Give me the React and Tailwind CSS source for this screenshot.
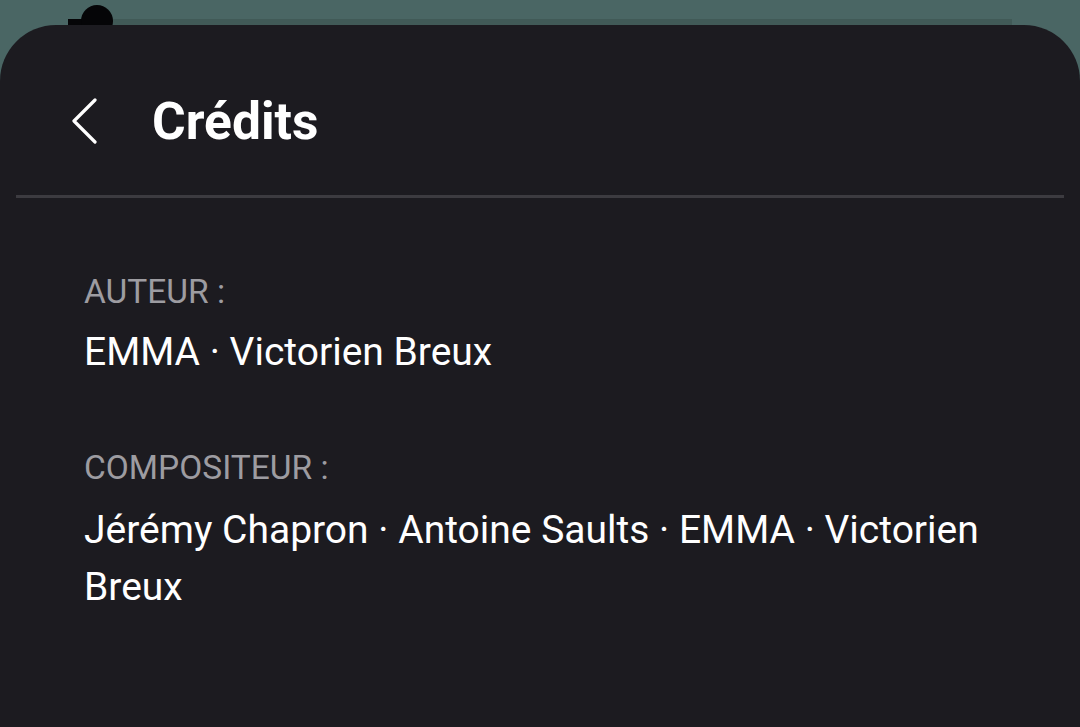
export default function App() {
  const font = { fontFamily: "Roboto, 'Noto Sans', sans-serif" };

  return (
    <div className="w-[1080px] h-[727px] bg-[#4a6664] flex flex-col overflow-hidden" style={font}>
      {/* top status strip */}
      <div className="relative h-[25px] shrink-0">
        <div className="absolute left-[80px] top-[19px] w-[932px] h-[6px] bg-[#415a57]" />
        <div className="absolute left-[68px] top-[19px] w-[20px] h-[6px] bg-[#050507]" />
        <div className="absolute left-[81px] top-[5px] w-[32px] h-[32px] rounded-full bg-[#050507]" />
      </div>

      <div className="relative flex-1 bg-[#1c1b20] rounded-t-[56px] flex flex-col">
        <div className="h-[170px] flex items-center pt-[24px] pl-[72px]">
          <svg width="26" height="48" viewBox="0 0 26 48" fill="none" className="shrink-0">
            <path d="M23 2 L2 23 L23 44" stroke="#ffffff" strokeWidth="3.2" strokeLinecap="round" strokeLinejoin="round" />
          </svg>
          <h1 className="ml-[54px] text-[51.5px] leading-none font-bold text-white">Crédits</h1>
        </div>

        <div className="mx-[16px] h-[3px] bg-[#3c3b40]" />

        <div className="px-[84px] pt-[72px]">
          <div>
            <p className="text-[33.5px] leading-[44px] text-[#9d9ca1]">AUTEUR :</p>
            <p className="mt-[10px] text-[39px] leading-[56px] text-white">EMMA · Victorien Breux</p>
          </div>
          <div className="mt-[66px]">
            <p className="text-[33.5px] leading-[44px] text-[#9d9ca1]">COMPOSITEUR :</p>
            <p className="mt-[12px] text-[39px] leading-[57px] text-white">
              Jérémy Chapron · Antoine Saults · EMMA · Victorien Breux
            </p>
          </div>
        </div>
      </div>
    </div>
  );
}
